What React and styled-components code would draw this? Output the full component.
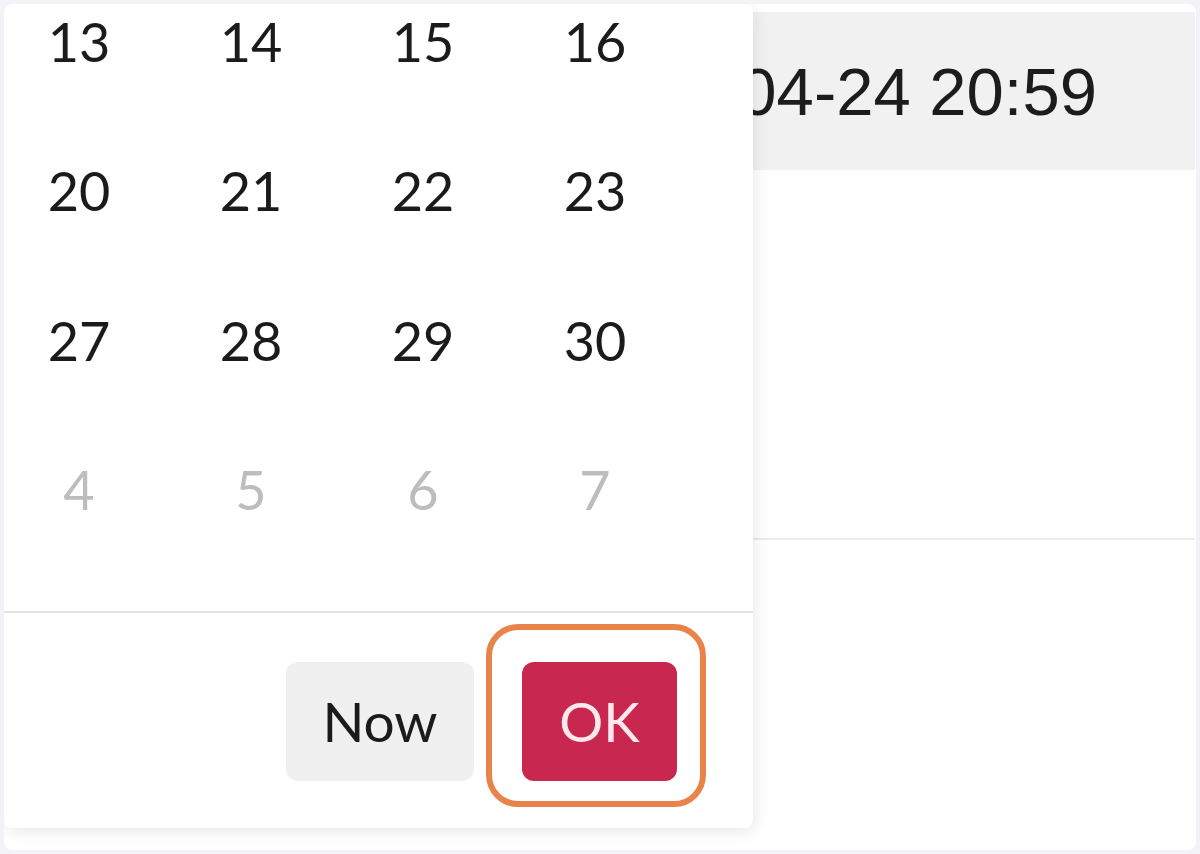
import React from 'react';
import styled, { createGlobalStyle } from 'styled-components';

const GlobalStyle = createGlobalStyle`
  html, body {
    margin: 0;
    padding: 0;
    background: #f3f2f7;
  }
  #root {
    width: 1200px;
    height: 854px;
    padding: 4px;
    box-sizing: border-box;
  }
`;

const Card = styled.div`
  position: relative;
  height: 846px;
  background: #ffffff;
  border-radius: 8px;
  overflow: hidden;
`;

const HeaderRow = styled.div`
  display: flex;
  align-items: center;
  justify-content: flex-end;
  margin: 8px 1px 0 0;
  height: 158px;
  padding-right: 98px;
  background: #f1f1f1;
  font-family: 'Liberation Sans', Arial, sans-serif;
  font-size: 67px;
  color: #1c1c1c;
  white-space: nowrap;
`;

const BodyRow = styled.div`
  height: 368px;
  margin-right: 1px;
  border-bottom: 2px solid #ececec;
`;

const Popup = styled.div`
  position: absolute;
  top: 0;
  left: 0;
  width: 749px;
  height: 824px;
  display: flex;
  flex-direction: column;
  background: #ffffff;
  border-radius: 8px;
  box-shadow: 2px 4px 16px rgba(0, 0, 0, 0.09);
  font-family: Lato, 'Noto Sans', sans-serif;
`;

const DayGrid = styled.div`
  display: grid;
  grid-template-columns: repeat(4, 150px);
  grid-auto-rows: 74px;
  column-gap: 22px;
  row-gap: 75.5px;
  padding-bottom: 84px;
`;

const Day = styled.div`
  display: flex;
  align-items: center;
  justify-content: center;
  font-size: 54px;
  color: ${(p) => (p.$muted ? '#bdbdbd' : '#1b1b1b')};
`;

const Footer = styled.div`
  display: flex;
  justify-content: flex-end;
  align-items: center;
  gap: 48px;
  padding: 49px 76px 48px 0;
  border-top: 2px solid #e3e3e3;
`;

const Button = styled.button`
  position: relative;
  height: 119px;
  border: none;
  border-radius: 12px;
  font-family: Lato, 'Noto Sans', sans-serif;
  font-size: 55px;
  padding: 0;
  width: ${(p) => (p.$primary ? '155px' : '188px')};
  background: ${(p) => (p.$primary ? '#c8284f' : '#f0f0f0')};
  color: ${(p) => (p.$primary ? '#fde8ee' : '#1b1b1b')};
`;

const FocusRing = styled.span`
  position: absolute;
  left: -36px;
  top: -38px;
  right: -29px;
  bottom: -26px;
  border: 6px solid #e8844a;
  border-radius: 32px;
  pointer-events: none;
`;

const weeks = [
  [13, 14, 15, 16],
  [20, 21, 22, 23],
  [27, 28, 29, 30],
  [4, 5, 6, 7],
];

export default function App() {
  return (
    <>
      <GlobalStyle />
      <Card>
        <HeaderRow>2024-04-24 20:59</HeaderRow>
        <BodyRow />
        <Popup>
          <DayGrid>
            {weeks.map((week, w) =>
              week.map((d) => (
                <Day key={`${w}-${d}`} $muted={w === 3}>
                  {d}
                </Day>
              )),
            )}
          </DayGrid>
          <Footer>
            <Button type="button">Now</Button>
            <Button type="button" $primary>
              OK
              <FocusRing />
            </Button>
          </Footer>
        </Popup>
      </Card>
    </>
  );
}
